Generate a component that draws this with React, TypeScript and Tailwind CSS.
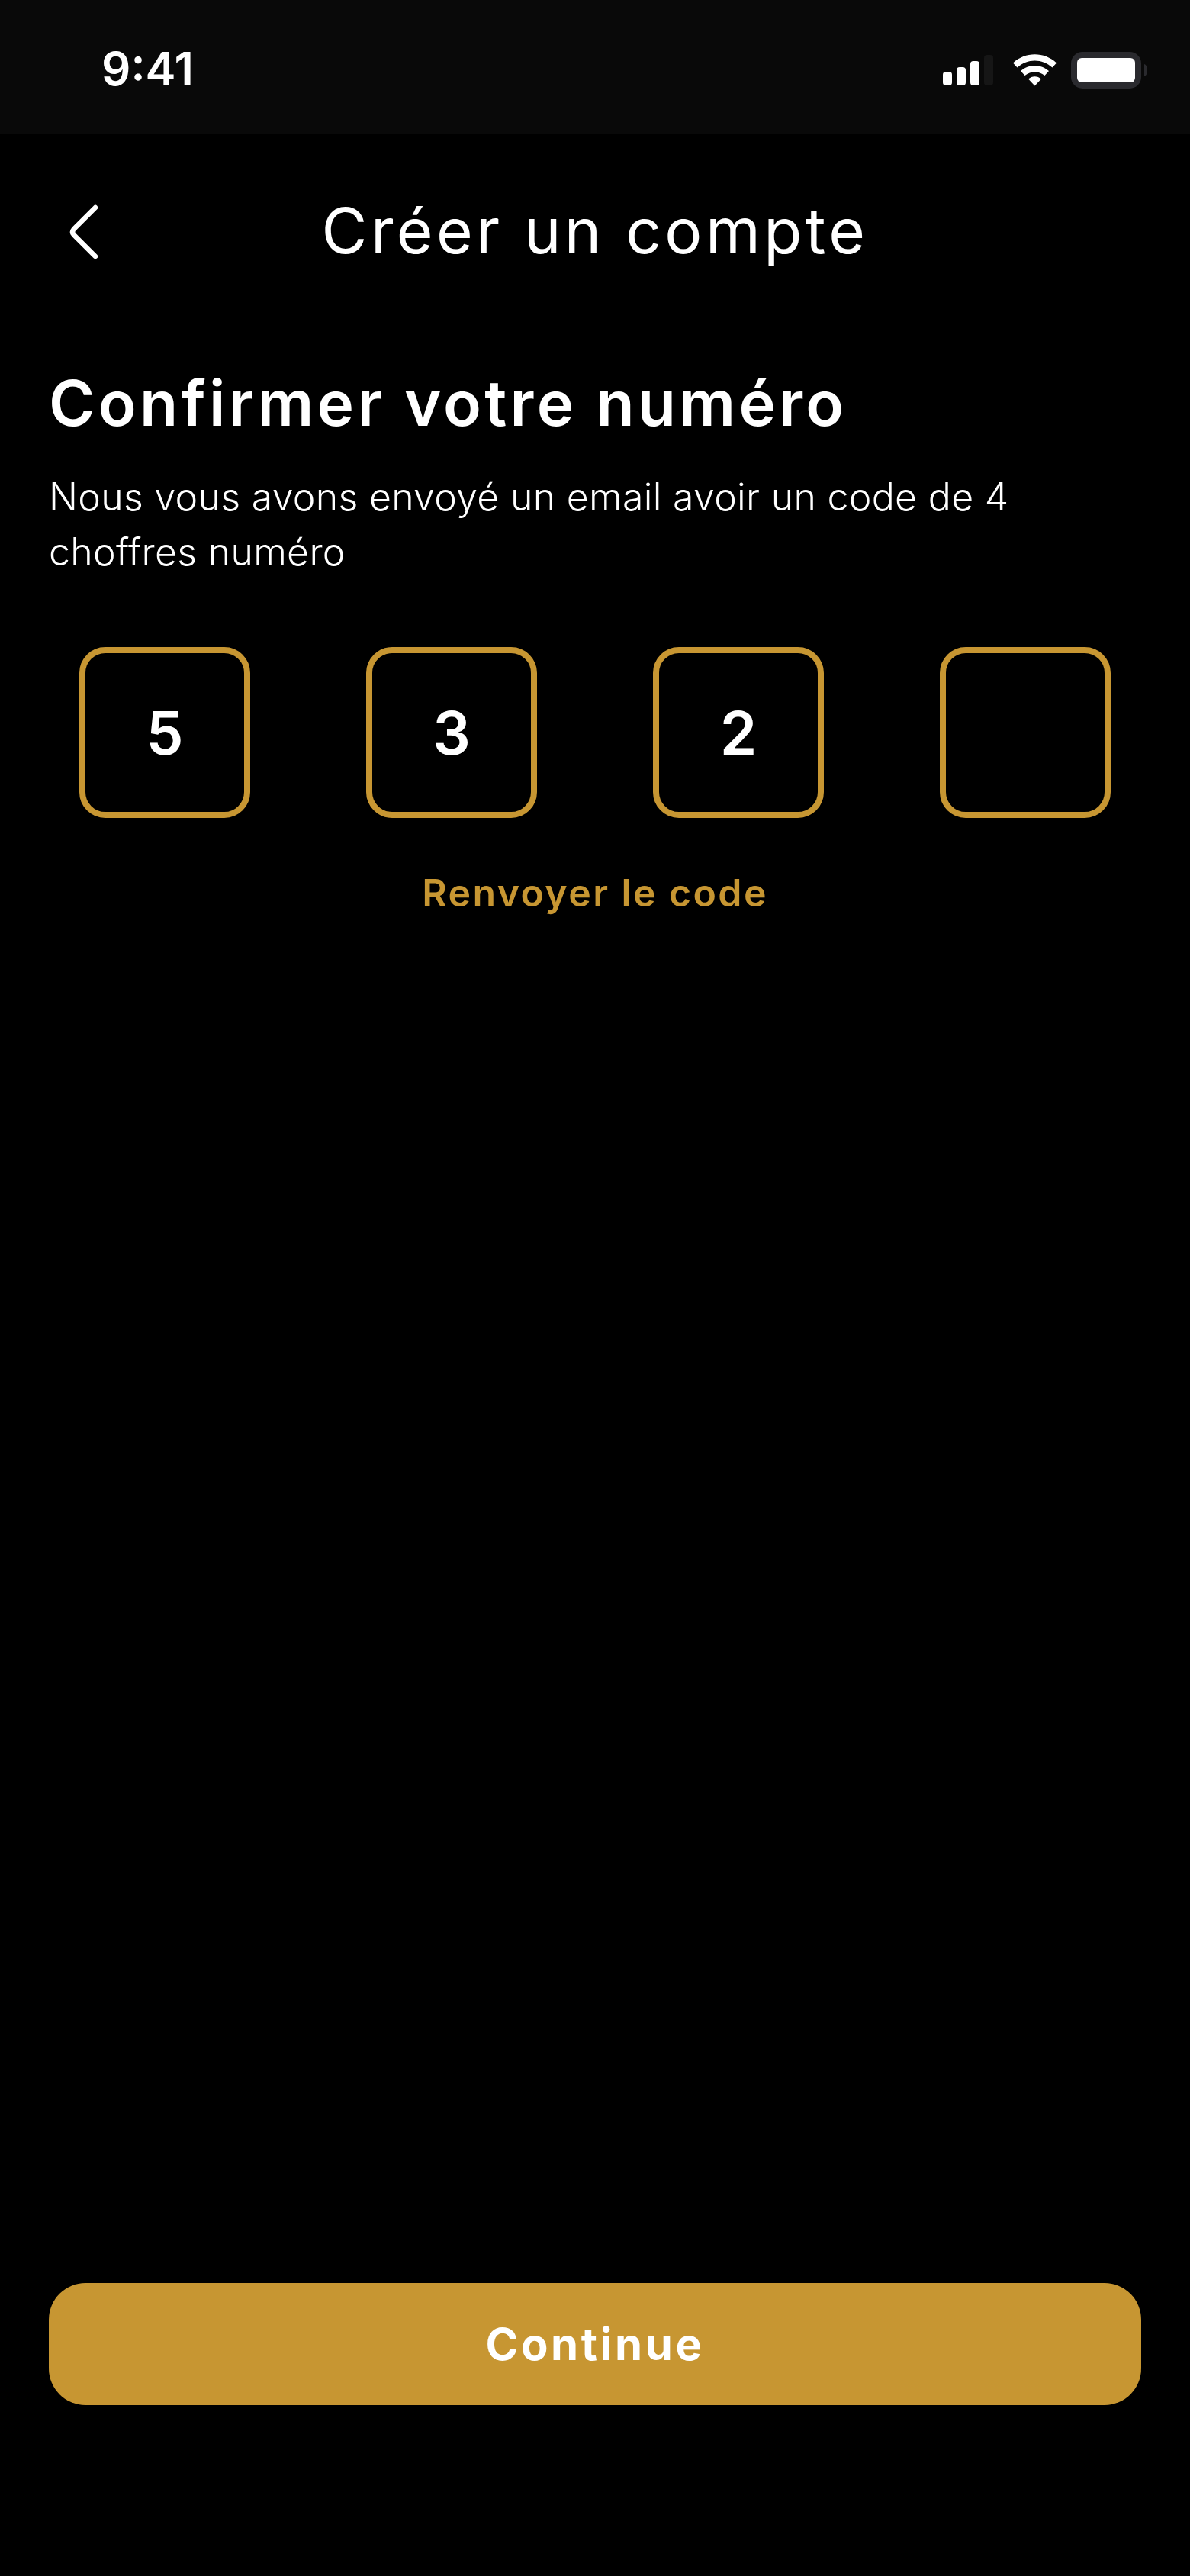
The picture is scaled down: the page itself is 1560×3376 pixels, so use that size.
const digits = ['5', '3', '2', '']

function StatusBar() {
  return (
    <div className="flex h-[176px] items-start justify-between bg-[#090909] pl-[133px] pr-[54px]">
      <span className="mt-[54px] text-[60px] leading-[72px] font-semibold text-white">9:41</span>
      <svg className="mt-[68px]" width="272" height="48" viewBox="0 0 272 48" fill="none">
        <rect x="2" y="26" width="12" height="18" rx="4" fill="#fff" />
        <rect x="20" y="20" width="12" height="24" rx="4" fill="#fff" />
        <rect x="38" y="12" width="12" height="32" rx="4" fill="#fff" />
        <rect x="56" y="4" width="12" height="40" rx="4" fill="#161616" />
        <path d="M94 14.500C110 -0.500 135 -0.500 151 14.500L145.500 20.500C132 8.500 113 8.500 99.500 20.500Z" fill="#fff" />
        <path d="M104 25C114.500 15.500 130.500 15.500 141 25L135.500 31C127.500 24.500 117.500 24.500 109.500 31Z" fill="#fff" />
        <path d="M114 35.500C119 31 126 31 131 35.500L122.500 44.500Z" fill="#fff" />
        <rect x="174" y="4" width="84" height="40" rx="11" stroke="#2a2a2e" strokeWidth="8" />
        <rect x="178" y="8" width="76" height="32" rx="6" fill="#fff" />
        <path d="M266 16C269 17 270 20 270 24C270 28 269 31 266 32Z" fill="#2a2a2e" />
      </svg>
    </div>
  )
}

function CodeBox({ value }: { value: string }) {
  return (
    <div className="flex h-[224px] w-[224px] items-center justify-center rounded-[34px] border-[8px] border-[#c79632] text-[78px] font-semibold text-white">
      {value}
    </div>
  )
}

export default function App() {
  return (
    <div className="flex h-[3376px] w-[1560px] flex-col overflow-hidden bg-black font-['Inter',sans-serif] text-white">
      <StatusBar />

      <div className="relative flex h-[130px] items-start justify-center">
        <svg className="absolute left-[88px] top-[90px]" width="44" height="76" viewBox="0 0 44 76" fill="none">
          <path d="M37 6L8.500 34.500Q5.500 38 8.500 41.500L37 70" stroke="#fff" strokeWidth="6.500" strokeLinecap="round" />
        </svg>
        <h1 className="mt-[82px] text-[82px] leading-[90px] font-normal tracking-[4.400px]">Créer un compte</h1>
      </div>

      <div className="px-[64px] pt-[178px]">
        <h2 className="text-[82px] leading-[90px] font-semibold tracking-[4.300px]">Confirmer votre numéro</h2>
        <p className="mt-[41px] w-[1300px] text-[50px] leading-[72px] font-light tracking-[0.300px]">
          Nous vous avons envoyé un email avoir un code de 4 choffres numéro
        </p>
      </div>

      <div className="mt-[89px] flex justify-between px-[104px]">
        {digits.map((digit, index) => (
          <CodeBox key={index} value={digit} />
        ))}
      </div>

      <p className="mt-[68px] text-center text-[50px] leading-[60px] font-semibold tracking-[2.400px] text-[#c79632]">
        Renvoyer le code
      </p>

      <div className="mt-auto px-[64px] pb-[224px]">
        <button className="flex h-[160px] w-full items-center justify-center rounded-[48px] bg-[#c79632] text-[58px] font-bold tracking-[3.600px] text-white">
          Continue
        </button>
      </div>
    </div>
  )
}
